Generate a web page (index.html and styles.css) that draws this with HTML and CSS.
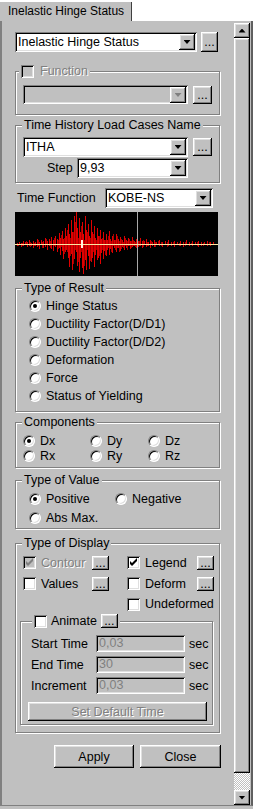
FILE: index.html
```html
<!DOCTYPE html>
<html lang="en">
<head>
    <meta charset="UTF-8">
    <meta name="viewport" content="width=device-width, initial-scale=1.0">
    <link rel="stylesheet" href="styles.css">
</head>
<body>
    <div class="tabStrip">
        <div class="tab">Inelastic Hinge Status</div>
    </div>
    <div class="panel">
        <div class="content">
            <div class="row topRow">
                <div class="combo mainCombo">
                    <span class="comboText">Inelastic Hinge Status</span>
                    <span class="dropBtn"></span>
                </div>
                <button class="dots topDots">...</button>
            </div>

            <fieldset class="group funcGroup">
                <legend class="checkLegend">
                    <span class="check off"></span>
                    <span class="dimText">Function</span>
                </legend>
                <div class="row funcRow">
                    <div class="combo off funcCombo">
                        <span class="comboText"></span>
                        <span class="dropBtn off"></span>
                    </div>
                    <button class="dots midDots">...</button>
                </div>
            </fieldset>

            <fieldset class="group thGroup">
                <legend>Time History Load Cases Name</legend>
                <div class="row thRow">
                    <div class="combo thCombo">
                        <span class="comboText">ITHA</span>
                        <span class="dropBtn"></span>
                    </div>
                    <button class="dots midDots">...</button>
                </div>
                <div class="row stepRow">
                    <span class="stepLabel">Step</span>
                    <div class="combo stepCombo">
                        <span class="comboText">9,93</span>
                        <span class="dropBtn"></span>
                    </div>
                </div>
            </fieldset>

            <div class="row tfRow">
                <span class="tfLabel">Time Function</span>
                <div class="combo tfCombo">
                    <span class="comboText">KOBE-NS</span>
                    <span class="dropBtn"></span>
                </div>
            </div>

            <div class="graph">
                <svg width="203" height="64" viewBox="0 0 203 64" shape-rendering="crispEdges">
                    <path stroke="#e00000" stroke-width="1" fill="none" d="M2.5 31V34M4.5 30V33M6.5 31V35M8.5 29V34M10.5 30V33M12.5 30V35M14.5 28V34M16.5 31V34M18.5 29V36M20.5 30V34M22.5 27V35M24.5 30V37M26.5 28V33M28.5 29V36M30.5 26V35M32.5 29V38M34.5 27V34M36.5 25V37M38.5 28V39M40.5 24V35M42.5 27V40M44.5 21V36M45.5 26V43M47.5 19V39M48.5 27V47M50.5 16V40M51.5 24V38M53.5 12V46M54.5 22V55M56.5 8V42M57.5 20V58M59.5 4V47M61.5 0V40M62.5 16V54M64.5 6V60M65.5 20V46M67.5 10V56M68.5 22V62M70.5 4V48M71.5 18V58M73.5 12V44M74.5 24V57M76.5 8V50M77.5 20V46M79.5 14V55M80.5 26V43M82.5 16V48M83.5 24V46M85.5 18V52M86.5 27V41M88.5 20V47M89.5 28V39M91.5 22V44M92.5 28V38M94.5 19V43M95.5 27V37M97.5 24V41M99.5 28V36M101.5 22V40M103.5 27V36M105.5 25V39M107.5 28V35M109.5 24V38M111.5 28V36M113.5 26V34M115.5 29V37M117.5 25V35M119.5 29V34M121.5 27V36M123.5 29V35M125.5 26V34M127.5 29V36M129.5 29V33M131.5 27V35M133.5 30V34M135.5 28V36M137.5 30V34M139.5 28V35M141.5 30V33M144.5 28V34M147.5 30V35M150.5 29V33M153.5 28V34M156.5 30V34M159.5 29V35M162.5 30V33M165.5 29V34M168.5 30V35M171.5 28V33M174.5 30V34M177.5 29V34M180.5 30V33M183.5 29V35M186.5 30V34M189.5 30V33M192.5 29V34M195.5 30V34M198.5 30V33"/>
                    <path stroke="#a80000" stroke-width="1" fill="none" d="M3.5 32V34M7.5 31V34M11.5 29V33M15.5 30V35M19.5 31V34M23.5 28V34M27.5 30V36M31.5 27V33M35.5 29V36M39.5 26V34M43.5 28V37M46.5 23V35M49.5 26V42M52.5 18V40M55.5 26V44M58.5 20V52M60.5 10V38M63.5 26V50M66.5 14V40M69.5 28V54M72.5 20V38M75.5 26V49M78.5 22V40M81.5 28V38M84.5 24V44M87.5 26V38M90.5 28V43M93.5 24V36M96.5 29V40M98.5 22V34M100.5 28V38M102.5 24V36M104.5 29V40M106.5 27V37M108.5 30V36M110.5 26V34M112.5 29V38M114.5 27V34M116.5 29V36M118.5 28V34M120.5 30V35M124.5 29V34M128.5 28V35M132.5 30V34M136.5 29V33M140.5 30V35M143.5 29V33M146.5 30V34M152.5 30V35M158.5 30V33M164.5 31V34M170.5 30V34M176.5 31V33M182.5 30V34M188.5 31V34M194.5 30V33"/>
                    <line x1="122.5" y1="0" x2="122.5" y2="64" stroke="#a8a8a8"/>
                    <line x1="0" y1="32.5" x2="203" y2="32.5" stroke="#ffe6a0"/>
                    <rect x="66" y="28" width="2" height="8" fill="#fff4e0"/>
                </svg>
            </div>

            <fieldset class="group resultGroup">
                <legend>Type of Result</legend>
                <div class="resultList">
                    <div class="opt"><span class="radio on"></span>Hinge Status</div>
                    <div class="opt"><span class="radio"></span>Ductility Factor(D/D1)</div>
                    <div class="opt"><span class="radio"></span>Ductility Factor(D/D2)</div>
                    <div class="opt"><span class="radio"></span>Deformation</div>
                    <div class="opt"><span class="radio"></span>Force</div>
                    <div class="opt"><span class="radio"></span>Status of Yielding</div>
                </div>
            </fieldset>

            <fieldset class="group compGroup">
                <legend>Components</legend>
                <div class="compGrid">
                    <div class="opt"><span class="radio on"></span>Dx</div>
                    <div class="opt"><span class="radio"></span>Dy</div>
                    <div class="opt"><span class="radio"></span>Dz</div>
                    <div class="opt"><span class="radio"></span>Rx</div>
                    <div class="opt"><span class="radio"></span>Ry</div>
                    <div class="opt"><span class="radio"></span>Rz</div>
                </div>
            </fieldset>

            <fieldset class="group valueGroup">
                <legend>Type of Value</legend>
                <div class="valueGrid">
                    <div class="opt"><span class="radio on"></span>Positive</div>
                    <div class="opt"><span class="radio"></span>Negative</div>
                    <div class="opt"><span class="radio"></span>Abs Max.</div>
                </div>
            </fieldset>

            <fieldset class="group displayGroup">
                <legend>Type of Display</legend>
                <div class="dispGrid">
                    <div class="dispItem">
                        <span class="check off"><svg width="13" height="13" viewBox="0 0 13 13"><polygon points="3,5 3,8 5,10 10,5 10,2 5,7" fill="#808080"/></svg></span>
                        <span class="dispLabel dimText">Contour</span>
                        <button class="dots smallDots">...</button>
                    </div>
                    <div class="dispItem">
                        <span class="check"><svg width="13" height="13" viewBox="0 0 13 13"><polygon points="3,5 3,8 5,10 10,5 10,2 5,7" fill="#000"/></svg></span>
                        <span class="dispLabel">Legend</span>
                        <button class="dots smallDots">...</button>
                    </div>
                    <div class="dispItem">
                        <span class="check"></span>
                        <span class="dispLabel">Values</span>
                        <button class="dots smallDots">...</button>
                    </div>
                    <div class="dispItem">
                        <span class="check"></span>
                        <span class="dispLabel">Deform</span>
                        <button class="dots smallDots">...</button>
                    </div>
                    <div class="dispItem"></div>
                    <div class="dispItem">
                        <span class="check"></span>
                        <span>Undeformed</span>
                    </div>
                </div>

                <fieldset class="group animGroup">
                    <legend class="checkLegend">
                        <span class="check"></span>
                        <span>Animate</span>
                        <button class="dots smallDots">...</button>
                    </legend>
                    <div class="timeRow">
                        <span class="timeLabel">Start Time</span>
                        <span class="field">0,03</span>
                        <span>sec</span>
                    </div>
                    <div class="timeRow">
                        <span class="timeLabel">End Time</span>
                        <span class="field">30</span>
                        <span>sec</span>
                    </div>
                    <div class="timeRow">
                        <span class="timeLabel">Increment</span>
                        <span class="field">0,03</span>
                        <span>sec</span>
                    </div>
                    <button class="btn defaultBtn">Set Default Time</button>
                </fieldset>
            </fieldset>

            <div class="row actionRow">
                <button class="btn applyBtn">Apply</button>
                <button class="btn closeBtn">Close</button>
            </div>
        </div>

        <div class="scrollbar">
            <div class="sbBtn up"></div>
            <div class="sbThumb"></div>
            <div class="sbTrack"></div>
            <div class="sbBtn down"></div>
        </div>
    </div>
</body>
</html>
```

FILE: styles.css
```css
html {
    background: #c0c0c0;
}
body {
    margin: 0;
    font-family: "Liberation Sans", Arial, sans-serif;
    font-size: 12.5px;
    color: #000;
}
button {
    font-family: inherit;
    font-size: inherit;
    color: inherit;
    border: none;
    padding: 0;
    margin: 0;
}

/* tab on top */
.tabStrip {
    height: 21px;
    background: #fff;
    display: flex;
    align-items: flex-end;
}
.tab {
    width: 132px;
    height: 19px;
    box-sizing: border-box;
    background: #c0c0c0;
    border-right: 1px solid #404040;
    padding-left: 8px;
    font-size: 12px;
    line-height: 18px;
}

.panel {
    display: flex;
    height: 785px;
    box-sizing: border-box;
    border-left: 2px solid #808080;
    border-bottom: 1px solid #808080;
    border-right: 2px solid #606060;
    padding-right: 1px;
}
.content {
    width: 219px;
    padding-left: 13px;
    display: flex;
    flex-direction: column;
    align-items: flex-start;
}

/* win 3d look */
.combo,
.field,
.check {
    box-shadow: inset 1px 1px #808080, inset -1px -1px #fff, inset 2px 2px #000, inset -2px -2px #dfdfdf;
}
.dots,
.btn,
.dropBtn,
.sbBtn,
.sbThumb {
    background: #c0c0c0;
    box-shadow: inset -1px -1px #000, inset 1px 1px #fff, inset -2px -2px #808080, inset 2px 2px #dfdfdf;
}

.row {
    display: flex;
    align-items: center;
}

.combo {
    display: flex;
    box-sizing: border-box;
    height: 20px;
    padding: 2px;
    background: #fff;
}
.combo.off {
    background: #c0c0c0;
}
.comboText {
    flex: 1;
    padding-left: 1px;
    line-height: 16px;
    white-space: nowrap;
    overflow: hidden;
}
.dropBtn {
    width: 16px;
    height: 16px;
    display: flex;
    align-items: center;
    justify-content: center;
}
.dropBtn::after {
    content: '';
    width: 7px;
    height: 4px;
    background: #000;
    clip-path: polygon(0 0, 100% 0, 50% 100%);
}
.dropBtn.off::after {
    background: #808080;
}

.dots {
    display: flex;
    align-items: center;
    justify-content: center;
    line-height: 14px;
}

.dimText {
    color: #808080;
    text-shadow: 1px 1px 0 #fff;
}

.topRow {
    margin-top: 11px;
    width: 206px;
}
.mainCombo {
    width: 182px;
}
.topDots {
    width: 17px;
    height: 20px;
    margin-left: 4px;
}

/* group boxes */
.group {
    margin: 0;
    padding: 0;
    width: 205px;
    box-sizing: border-box;
    border: 1px solid #808080;
    box-shadow: 1px 1px 0 #fff, inset 1px 1px 0 #fff;
    min-inline-size: 0;
}
.group > legend {
    margin-left: 6px;
    padding: 0 2px;
    height: 14px;
    line-height: 14px;
    background: #c0c0c0;
}
.group > legend.checkLegend {
    display: flex;
    align-items: center;
    gap: 6px;
    margin-left: 3px;
}

.check {
    display: block;
    width: 13px;
    height: 13px;
    box-sizing: border-box;
    background: #fff;
    flex: none;
}
.check.off {
    background: #c0c0c0;
}
.check svg {
    display: block;
}

.funcGroup {
    margin-top: 12px;
}
.funcRow {
    padding: 7px 0 10px 7px;
}
.funcCombo {
    width: 165px;
    height: 19px;
}
.midDots {
    width: 19px;
    height: 18px;
    margin-left: 5px;
}

.thGroup {
    margin-top: 3px;
}
.thRow {
    padding: 5px 0 0 7px;
}
.thCombo {
    width: 165px;
}
.stepRow {
    padding: 1px 0 4px 31px;
}
.stepLabel {
    width: 30px;
}
.stepCombo {
    width: 111px;
}

.tfRow {
    margin-top: 5px;
    padding-left: 2px;
}
.tfLabel {
    width: 88px;
}
.tfCombo {
    width: 108px;
}

.graph {
    margin-top: 4px;
    width: 203px;
    height: 64px;
    background: #000;
}
.graph svg {
    display: block;
}

/* radio options */
.opt {
    display: flex;
    align-items: center;
    gap: 5px;
    white-space: nowrap;
}
.radio {
    position: relative;
    width: 12px;
    height: 12px;
    box-sizing: border-box;
    border-radius: 50%;
    background: #fff;
    border: 1px solid;
    border-color: #808080 #fff #fff #808080;
    box-shadow: inset 1px 1px #000, inset -1px -1px #dfdfdf;
    flex: none;
}
.radio.on::after {
    content: '';
    position: absolute;
    left: 3px;
    top: 3px;
    width: 4px;
    height: 4px;
    border-radius: 50%;
    background: #000;
}

.resultGroup {
    margin-top: 5px;
}
.resultList {
    display: grid;
    grid-auto-rows: 18px;
    padding: 2px 0 6px 13px;
}

.compGroup {
    margin-top: 3px;
}
.compGrid {
    display: grid;
    grid-template-columns: 67px 58px 1fr;
    grid-auto-rows: 15px;
    padding: 4px 0 4px 7px;
}

.valueGroup {
    margin-top: 5px;
}
.valueGrid {
    display: grid;
    grid-template-columns: 86px 1fr;
    grid-auto-rows: 19px;
    padding: 2px 0 1px 13px;
}

.displayGroup {
    margin-top: 7px;
    padding-bottom: 7px;
}
.dispGrid {
    display: grid;
    grid-template-columns: 104px 1fr;
    grid-template-rows: 21px 21px 20px;
    padding: 2px 0 0 7px;
}
.dispItem {
    display: flex;
    align-items: center;
    gap: 5px;
}
.dispItem .dispLabel {
    width: 47px;
}
.dispItem:nth-child(odd) .dispLabel {
    width: 46px;
}
.smallDots {
    width: 17px;
    height: 14px;
}

.animGroup {
    width: 193px;
    margin-left: 4px;
    padding: 5px 0 3px 10px;
}
.animGroup > legend.checkLegend {
    margin-left: 1px;
    gap: 4px;
}
.timeRow {
    display: flex;
    align-items: center;
    height: 21px;
    gap: 4px;
}
.timeLabel {
    width: 61px;
}
.field {
    width: 89px;
    height: 17px;
    box-sizing: border-box;
    padding: 2px 0 0 3px;
    line-height: 13px;
    color: #808080;
}

.btn {
    display: flex;
    align-items: center;
    justify-content: center;
}
.defaultBtn {
    width: 179px;
    height: 19px;
    margin: 6px 0 0 -3px;
    color: #808080;
    text-shadow: 1px 1px 0 #fff;
}

.actionRow {
    margin-top: 12px;
    width: 206px;
    justify-content: flex-end;
    gap: 6px;
}
.applyBtn {
    width: 80px;
    height: 23px;
}
.closeBtn {
    width: 81px;
    height: 23px;
}

/* scroll bar */
.scrollbar {
    width: 16px;
    margin-top: 2px;
    display: flex;
    flex-direction: column;
}
.sbBtn {
    height: 15px;
    display: flex;
    align-items: center;
    justify-content: center;
}
.sbBtn::after {
    content: '';
    width: 7px;
    height: 4px;
    background: #000;
}
.sbBtn.up::after {
    clip-path: polygon(50% 0, 100% 100%, 0 100%);
}
.sbBtn.down::after {
    clip-path: polygon(0 0, 100% 0, 50% 100%);
}
.sbThumb {
    flex: 1;
}
.sbTrack {
    height: 17px;
    background: repeating-conic-gradient(#fff 0 25%, #c0c0c0 0 50%) 0 0 / 2px 2px;
}
```
